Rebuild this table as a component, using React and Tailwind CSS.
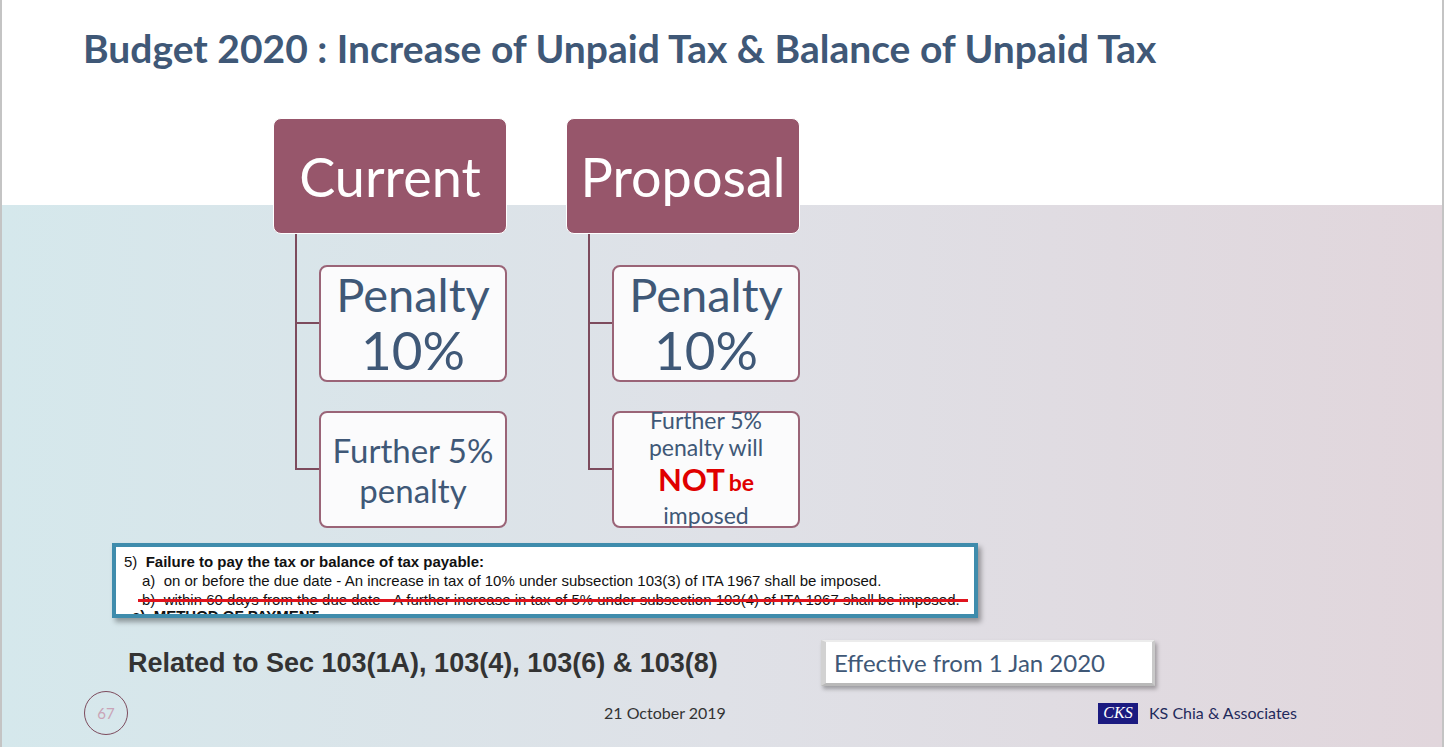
import React from 'react';

const calibri = { fontFamily: 'Lato, "Open Sans", sans-serif' };
const arial = { fontFamily: '"Liberation Sans", Arial, sans-serif' };

const Connector = () => (
  <svg width="46" height="236" className="shrink-0">
    <path d="M23 0 V235 H46 M23 89 H46" fill="none" stroke="#7d4b5d" strokeWidth="2" />
  </svg>
);

const Column = ({ title, children }) => (
  <div className="w-[234px]">
    <div className="h-[116px] rounded-lg border border-white bg-[#97566b] flex items-center justify-center text-white text-[54px]">
      {title}
    </div>
    <div className="flex">
      <Connector />
      <div className="flex flex-col gap-[29px] pt-[31px]">{children}</div>
    </div>
  </div>
);

const Card = ({ children, className = '' }) => (
  <div
    className={`w-[188px] h-[117px] rounded-lg border-2 border-[#9a6477] bg-[#fbfbfc] text-[#3f5877] flex flex-col items-center text-center ${className}`}
  >
    {children}
  </div>
);

export default function App() {
  return (
    <div
      style={calibri}
      className="w-[1444px] h-[747px] overflow-hidden border-l-2 border-r-2 border-[#c4c4c4] bg-[linear-gradient(to_bottom,#ffffff_205px,transparent_205px),linear-gradient(to_right,#d5e8ec,#dfe1e7,#e1d6dc)]"
    >
      <h1 className="pl-[81px] pt-[22px] text-[39px] leading-[52px] font-bold text-[#3f5877]">
        Budget 2020 : Increase of Unpaid Tax &amp; Balance of Unpaid Tax
      </h1>

      <div className="flex gap-[59px] pl-[271px] mt-[44px]">
        <Column title="Current">
          <Card className="justify-center">
            <div className="text-[47px] leading-[56px] -mt-[4px]">Penalty</div>
            <div className="text-[53px] leading-[56px]">10%</div>
          </Card>
          <Card className="justify-center">
            <div className="text-[33px] leading-[40px]">Further 5%</div>
            <div className="text-[33px] leading-[40px]">penalty</div>
          </Card>
        </Column>
        <Column title="Proposal">
          <Card className="justify-center">
            <div className="text-[47px] leading-[56px] -mt-[4px]">Penalty</div>
            <div className="text-[53px] leading-[56px]">10%</div>
          </Card>
          <Card className="justify-start">
            <div className="text-[23px] leading-[28px] -mt-[7px]">Further 5%</div>
            <div className="text-[23px] leading-[26px]">penalty will</div>
            <div className="leading-[38px] font-bold text-[#e00000]">
              <span className="text-[31px]">NOT</span> <span className="text-[23px]">be</span>
            </div>
            <div className="text-[23px] leading-[22px]">imposed</div>
          </Card>
        </Column>
      </div>

      <div
        style={arial}
        className="ml-[110px] mt-[15px] w-[866px] h-[75px] border-4 border-[#3f8cac] bg-white shadow-[3px_4px_5px_rgba(0,0,0,0.35)] overflow-hidden px-[8px] pt-[5px] text-[15px] leading-[19px] text-[#111]"
      >
        <div>
          5)&nbsp; <span className="font-bold">Failure to pay the tax or balance of tax payable:</span>
        </div>
        <div className="pl-[18px]">a)&nbsp; on or before the due date - An increase in tax of 10% under subsection 103(3) of ITA 1967 shall be imposed.</div>
        <div className="pl-[18px] relative whitespace-nowrap">
          b)&nbsp; within 60 days from the due date - A further increase in tax of 5% under subsection 103(4) of ITA 1967 shall be imposed.
          <span className="absolute left-[14px] w-[830px] top-[9px] h-[3px] bg-[#e0141e]" />
        </div>
        <div className="pl-[8px] font-bold -mt-[3px]">c)&nbsp; METHOD OF PAYMENT</div>
      </div>

      <div className="flex items-center mt-[22px]">
        <div style={arial} className="ml-[126px] w-[693px] text-[27px] font-bold text-[#333]">
          Related to Sec 103(1A), 103(4), 103(6) &amp; 103(8)
        </div>
        <div className="w-[334px] h-[46px] bg-white border-l-[5px] border-t-[2px] border-r-[3px] border-b-[3px] border-l-[#d2d2d2] border-t-[#ececec] border-r-[#c9c9c9] border-b-[#b9b9b9] shadow-[2px_3px_4px_rgba(0,0,0,0.3)] flex items-center pl-[8px] text-[24px] text-[#3f5877]">
          Effective from 1 Jan 2020
        </div>
      </div>

      <div className="flex items-center mt-[3px] h-[48px]">
        <div className="ml-[82px] w-[44px] h-[44px] rounded-full border-[1.5px] border-[#7d4b5d] flex items-center justify-center text-[15px] text-[#c9a3b6]">
          67
        </div>
        <div className="ml-[476px] w-[130px] text-[16px] text-[#333]">21 October 2019</div>
        <div className="ml-[364px] flex items-center">
          <div className="w-[40px] h-[21px] bg-[#1b1a80] flex items-center justify-center text-white italic text-[16px] leading-none" style={{ fontFamily: '"Liberation Serif", serif' }}>
            CKS
          </div>
          <div className="ml-[11px] text-[16px] text-[#1f2a5c]">KS Chia &amp; Associates</div>
        </div>
      </div>
    </div>
  );
}
